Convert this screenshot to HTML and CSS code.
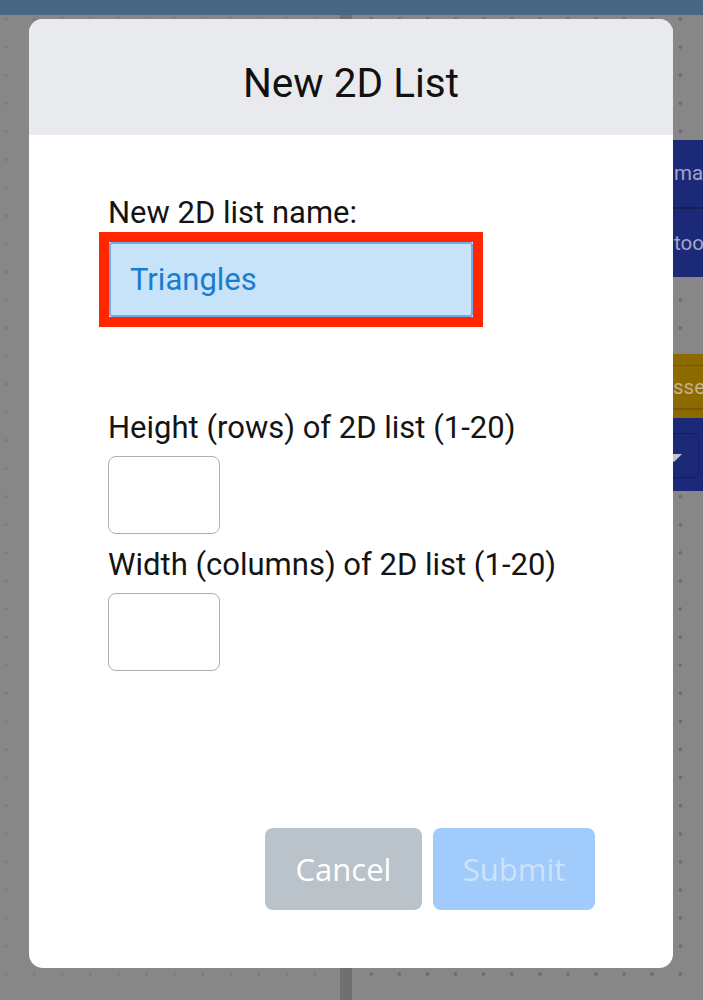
FILE: index.html
```html
<!DOCTYPE html>
<html lang="en">
<head>
<meta charset="utf-8">
<title>New 2D List</title>
<link rel="stylesheet" href="styles.css">
</head>
<body>
<div class="app">
  <div class="topbar"></div>
  <div class="workspace">
    <div class="pane-left"></div>
    <div class="divider"></div>
    <div class="canvas"></div>
    <aside class="panel">
      <div class="pbtn blue first">ma</div>
      <div class="pbtn blue">too</div>
      <div class="pgap"></div>
      <div class="pbtn gold"><div class="gold-inner">sse</div></div>
      <div class="pbtn navy"><div class="dropdown"><span class="tri"></span></div></div>
    </aside>
  </div>
</div>

<div class="modal">
  <div class="modal-header"><h1 class="modal-title">New 2D List</h1></div>
  <div class="modal-body">
    <label class="field-label" for="listname">New 2D list name:</label>
    <div class="highlight">
      <input class="name-input" id="listname" type="text" value="Triangles">
    </div>
    <label class="field-label gap-lg" for="rows">Height (rows) of 2D list (1-20)</label>
    <input class="num-input" id="rows" type="text">
    <label class="field-label gap-sm" for="cols">Width (columns) of 2D list (1-20)</label>
    <input class="num-input" id="cols" type="text">
  </div>
  <div class="modal-footer">
    <button class="btn btn-cancel">Cancel</button>
    <button class="btn btn-submit">Submit</button>
  </div>
</div>
</body>
</html>
```
FILE: styles.css
```css
html, body {
  margin: 0;
  padding: 0;
}
body {
  width: 703px;
  height: 1000px;
  overflow: hidden;
  background-color: #878787;
  font-family: Roboto, "Liberation Sans", sans-serif;
  position: relative;
}
.app {
  display: flex;
  flex-direction: column;
  height: 1000px;
}
.topbar {
  height: 15px;
  background: #496785;
  flex: none;
}
.workspace {
  flex: 1;
  display: grid;
  grid-template-columns: 340px 12px 1fr 48px;
}
.pane-left,
.canvas,
.panel {
  background-color: #878787;
  background-image: radial-gradient(circle, #6b6b6b 0, #6b6b6b 1.4px, rgba(107,107,107,0) 2.2px);
  background-size: 28.1px 28.1px;
  background-position: -8px 5px;
  background-attachment: fixed;
}
.pane-left {
  background-image: radial-gradient(circle, #7b7b7b 0, #7b7b7b 1.3px, rgba(123,123,123,0) 2.1px);
}
.divider {
  background: #707070;
}
.panel {
  padding-top: 125px;
  display: flex;
  flex-direction: column;
  overflow: hidden;
}
.pbtn {
  box-sizing: border-box;
  height: 68px;
  padding-left: 19px;
  font-size: 20.5px;
  line-height: 68px;
  white-space: nowrap;
  overflow: hidden;
}
.blue {
  background: #1c2878;
  color: #a3a7c4;
}
.blue.first {
  height: 69px;
  line-height: 66px;
  border-bottom: 2px solid #141c5a;
}
.pgap {
  height: 77px;
}
.gold {
  height: 64px;
  background: #8d6a00;
  color: #c4b188;
  padding-top: 11px;
  padding-left: 0;
}
.gold-inner {
  box-sizing: border-box;
  height: 45px;
  line-height: 42px;
  padding-left: 18px;
  border-top: 1px solid #765800;
  border-bottom: 2px solid #765800;
}
.navy {
  height: 73px;
  background: #1c2878;
  padding-left: 0;
  padding-top: 15px;
}
.dropdown {
  box-sizing: border-box;
  height: 45px;
  margin-right: 4px;
  border: 1.5px solid #151d5e;
  border-radius: 6px;
  display: flex;
  align-items: center;
  padding-top: 4px;
}
.tri {
  width: 0;
  height: 0;
  margin-left: 10px;
  border-left: 8px solid transparent;
  border-right: 8px solid transparent;
  border-top: 8px solid #c2c3cb;
}

/* Modal */
.modal {
  position: absolute;
  left: 29px;
  top: 19px;
  width: 644px;
  height: 949px;
  background: #ffffff;
  border-radius: 14px;
  overflow: hidden;
  display: flex;
  flex-direction: column;
}
.modal-header {
  flex: none;
  box-sizing: border-box;
  height: 116px;
  padding-top: 41px;
  background: #e9eaee;
  text-align: center;
}
.modal-title {
  margin: 0;
  font: 400 40.5px/47px Roboto, "Liberation Sans", sans-serif;
  color: #111111;
}
.modal-body {
  display: flex;
  flex-direction: column;
  align-items: flex-start;
  padding: 60px 0 0 79px;
}
.field-label {
  font: 400 31px/35px Roboto, "Liberation Sans", sans-serif;
  color: #141414;
}
.gap-lg {
  margin-top: 83px;
}
.gap-sm {
  margin-top: 13px;
}
.highlight {
  display: flex;
  margin: 2px 0 0 -9px;
  border: 10px solid #ff2600;
}
.name-input {
  box-sizing: border-box;
  width: 364px;
  height: 75px;
  margin: 0;
  padding: 0 0 0 19px;
  background: #c6e3fa;
  border: 2px solid #72aaee;
  border-radius: 3px;
  outline: none;
  font: 400 31px Roboto, "Liberation Sans", sans-serif;
  color: #1a7ccf;
}
.num-input {
  box-sizing: border-box;
  width: 112px;
  height: 78px;
  margin-top: 11px;
  background: #ffffff;
  border: 1.5px solid #b0b0b0;
  border-radius: 8px;
  outline: none;
  font: 400 30px Roboto, "Liberation Sans", sans-serif;
}
.modal-footer {
  margin-top: auto;
  display: flex;
  justify-content: flex-end;
  gap: 11px;
  padding: 0 78px 58px 0;
}
.btn {
  height: 82px;
  border: none;
  border-radius: 8px;
  font: 400 31px "Open Sans", "Liberation Sans", sans-serif;
  padding: 0;
}
.btn-cancel {
  width: 157px;
  background: #bac2ca;
  color: #ffffff;
}
.btn-submit {
  width: 162px;
  background: #a0cbfa;
  color: #cde2fb;
}
```
